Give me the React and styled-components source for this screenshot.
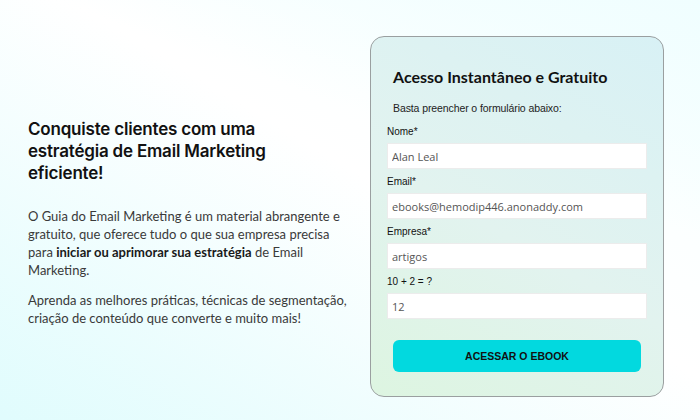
import React from 'react';
import styled, { createGlobalStyle } from 'styled-components';

const GlobalStyle = createGlobalStyle`
    html, body {
        margin: 0;
        padding: 0;
    }
    body {
        font-family: "Liberation Sans", Arial, sans-serif;
    }
`;

const fields = [
    { label: 'Nome*', value: 'Alan Leal' },
    { label: 'Email*', value: 'ebooks@hemodip446.anonaddy.com' },
    { label: 'Empresa*', value: 'artigos' },
    { label: '10 + 2 = ?', value: '12' },
];

export default function App() {
    return (
        <>
            <GlobalStyle />
            <Page>
                <Intro>
                    <Heading>Conquiste clientes com uma estratégia de Email Marketing eficiente!</Heading>
                    <Text>
                        O Guia do Email Marketing é um material abrangente e gratuito, que oferece tudo o que
                        sua empresa precisa para <strong>iniciar ou aprimorar sua estratégia</strong> de Email
                        Marketing.
                    </Text>
                    <Text $gap="12px">
                        Aprenda as melhores práticas, técnicas de segmentação, criação de conteúdo que
                        converte e muito mais!
                    </Text>
                </Intro>
                <Card>
                    <CardTitle>Acesso Instantâneo e Gratuito</CardTitle>
                    <CardSub>Basta preencher o formulário abaixo:</CardSub>
                    <Form onSubmit={(e) => e.preventDefault()}>
                        {fields.map((f) => (
                            <Field key={f.label}>
                                <Label>{f.label}</Label>
                                <Input defaultValue={f.value} />
                            </Field>
                        ))}
                        <Button type="submit">ACESSAR O EBOOK</Button>
                    </Form>
                </Card>
            </Page>
        </>
    );
}

const Page = styled.div`
    min-height: 420px;
    box-sizing: border-box;
    display: flex;
    align-items: center;
    padding: 36px 36px 23px 28px;
    background:
        linear-gradient(200deg, rgba(240, 254, 255, 1) 0%, rgba(255, 255, 255, 0) 35%),
        linear-gradient(to top right, #e0fcfd 0%, #ffffff 55%, #f6ffff 100%);
`;

const Intro = styled.div`
    flex: 1;
    margin-top: 12px;
    max-width: 324px;
`;

const Heading = styled.h1`
    margin: 0 0 23px;
    max-width: 262px;
    font-family: Inter, Lato, sans-serif;
    font-size: 17px;
    line-height: 22px;
    font-weight: 600;
    letter-spacing: -0.2px;
    color: #111;
`;

const Text = styled.p`
    margin: ${(p) => p.$gap || '0'} 0 0;
    font-family: Lato, "Noto Sans", sans-serif;
    font-size: 13px;
    line-height: 18px;
    color: #3a3a3a;

    strong {
        color: #1a1a1a;
        font-weight: 700;
    }
`;

const Card = styled.div`
    width: 294px;
    height: 361px;
    box-sizing: border-box;
    margin-left: auto;
    padding: 30px 16px 24px;
    border: 1px solid #9a9fa0;
    border-radius: 14px;
    background: linear-gradient(30deg, #ddf5e1 0%, #e2f3ef 45%, #d8f1f5 100%);
`;

const CardTitle = styled.h2`
    margin: 0;
    padding: 0 6px;
    font-family: Lato, "Noto Sans", sans-serif;
    font-size: 16px;
    line-height: 20px;
    font-weight: 700;
    letter-spacing: 0;
    color: #111;
`;

const CardSub = styled.p`
    margin: 14px 0 0;
    padding: 0 6px;
    font-size: 10.5px;
    line-height: 14px;
    letter-spacing: -0.1px;
    color: #222;
`;

const Form = styled.form`
    margin-top: 11px;
    display: flex;
    flex-direction: column;
`;

const Field = styled.div`
    display: flex;
    flex-direction: column;
    gap: 5px;
    margin-bottom: 7px;
`;

const Label = styled.label`
    font-size: 10px;
    line-height: 12px;
    color: #111;
`;

const Input = styled.input`
    height: 26px;
    box-sizing: border-box;
    width: 100%;
    padding: 0 4px;
    border: 1px solid #ececec;
    border-radius: 0;
    background: #fff;
    font-family: "Open Sans", sans-serif;
    font-size: 11px;
    color: #555;
    outline: none;
`;

const Button = styled.button`
    margin: 14px 6px 0;
    height: 32px;
    border: none;
    border-radius: 6px;
    background: #02d9df;
    font-family: "Liberation Sans", Arial, sans-serif;
    font-size: 10.5px;
    font-weight: 700;
    color: #111;
    cursor: pointer;
`;
